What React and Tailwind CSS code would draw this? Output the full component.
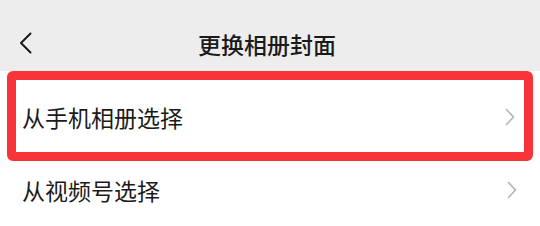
const FONT = { fontFamily: '"Noto Sans CJK SC", "Noto Sans", sans-serif' };

function Chevron({ className = "", color = "#b3b3b3", w = 10, h = 18 }) {
  return (
    <svg width={w} height={h} viewBox="0 0 10 18" className={className} fill="none">
      <path d="M1.5 1.5 L8.5 9 L1.5 16.5" stroke={color} strokeWidth="1.6" strokeLinecap="round" strokeLinejoin="round" />
    </svg>
  );
}

function Row({ label, className = "" }) {
  return (
    <div className={`flex items-center justify-between ${className}`}>
      <span className="text-[23px] text-[#1b1b1b] leading-none">{label}</span>
      <Chevron />
    </div>
  );
}

export default function App() {
  return (
    <div className="w-[540px] h-[226px] bg-white overflow-hidden" style={FONT}>
      <div className="h-[71px] bg-[#ededed] pt-[15px] flex items-center relative">
        <svg width="14" height="22" viewBox="0 0 14 22" className="ml-[19px]" fill="none">
          <path d="M11.5 1.5 L2 11 L11.5 20.5" stroke="#1b1b1b" strokeWidth="2" strokeLinecap="round" strokeLinejoin="round" />
        </svg>
        <div className="absolute inset-0 flex items-center justify-center pr-[6px] pt-[17px]">
          <span className="text-[23px] font-medium text-[#1b1b1b] leading-none">更换相册封面</span>
        </div>
      </div>
      <div className="mx-[7px] w-[526px] h-[90px] border-[9px] border-[#f73438] rounded-[6px] flex flex-col justify-center">
        <Row label="从手机相册选择" className="pl-[6px] pr-[9px] pt-[2px]" />
      </div>
      <Row label="从视频号选择" className="h-[58px] pl-[22px] pr-[23px]" />
    </div>
  );
}
